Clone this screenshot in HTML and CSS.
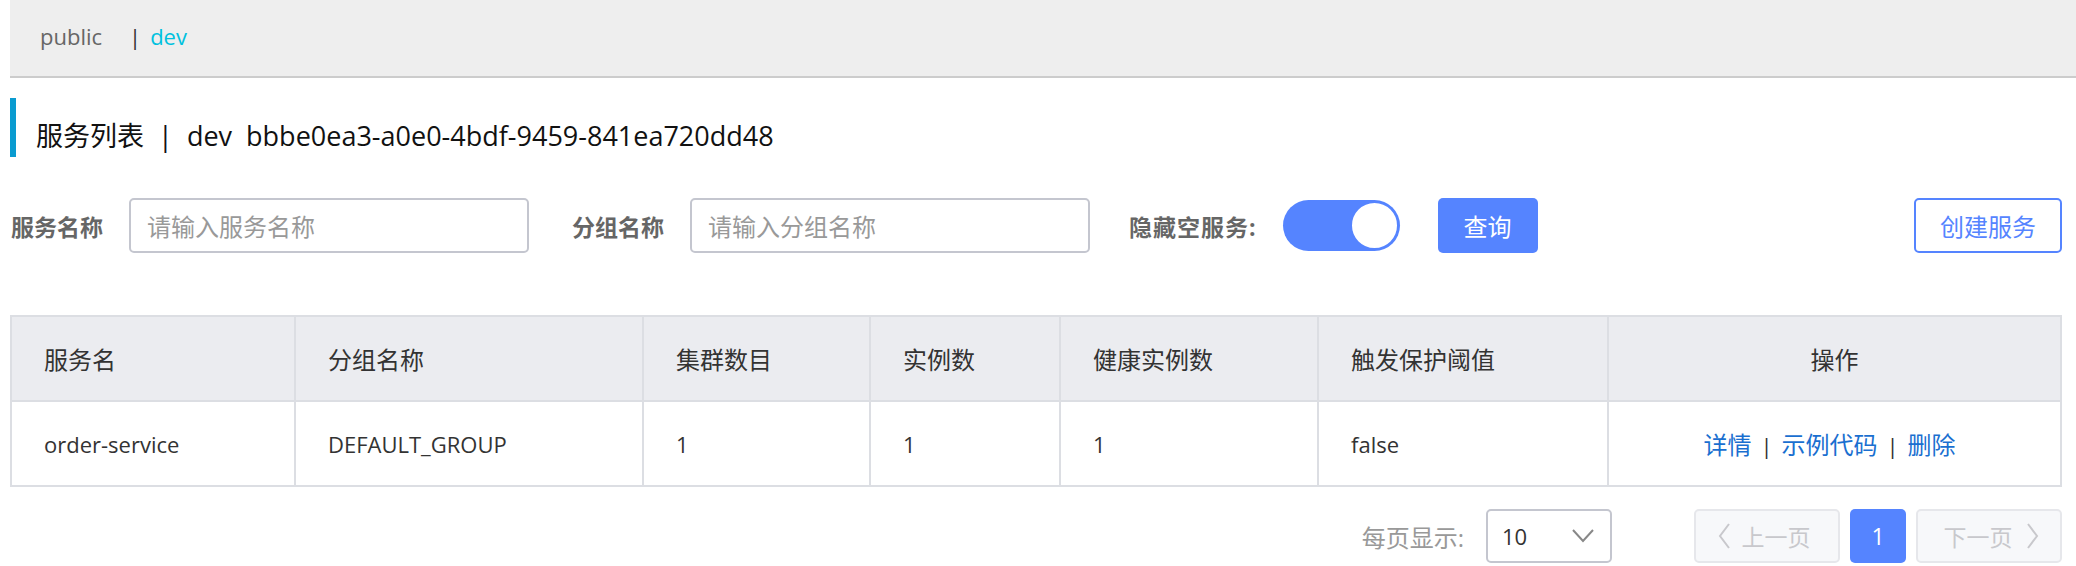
FILE: index.html
```html
<!DOCTYPE html>
<html lang="zh-CN">
<head>
<meta charset="utf-8">
<title>服务列表</title>
<link rel="stylesheet" href="styles.css">
</head>
<body>
<div class="ns-bar">
  <span class="ns-item">public</span>
  <span class="ns-sep">|</span>
  <span class="ns-item ns-active">dev</span>
</div>
<div class="page">
  <h1 class="page-title">服务列表&nbsp;&nbsp;|&nbsp;&nbsp;dev&nbsp;&nbsp;bbbe0ea3-a0e0-4bdf-9459-841ea720dd48</h1>

  <div class="filters">
    <label class="f-label">服务名称</label>
    <div class="input"><span class="placeholder">请输入服务名称</span></div>
    <label class="f-label f-gap">分组名称</label>
    <div class="input"><span class="placeholder">请输入分组名称</span></div>
    <label class="f-label f-gap f-last">隐藏空服务:</label>
    <div class="switch"><span class="knob"></span></div>
    <button class="btn btn-primary">查询</button>
    <button class="btn btn-outline">创建服务</button>
  </div>

  <table class="grid">
    <colgroup>
      <col style="width:284px"><col style="width:348px"><col style="width:227px"><col style="width:190px"><col style="width:258px"><col style="width:290px"><col>
    </colgroup>
    <thead>
      <tr>
        <th>服务名</th><th>分组名称</th><th>集群数目</th><th>实例数</th><th>健康实例数</th><th>触发保护阈值</th><th class="center">操作</th>
      </tr>
    </thead>
    <tbody>
      <tr>
        <td>order-service</td><td>DEFAULT_GROUP</td><td>1</td><td>1</td><td>1</td><td>false</td>
        <td class="center ops"><a class="link">详情</a><span class="bar">|</span><a class="link">示例代码</a><span class="bar">|</span><a class="link">删除</a></td>
      </tr>
    </tbody>
  </table>

  <div class="pager">
    <span class="pg-label">每页显示:</span>
    <div class="pg-select"><span>10</span>
      <svg class="chev" width="22" height="14" viewBox="0 0 22 14"><path d="M1 1 L11 12 L21 1" fill="none" stroke="#888" stroke-width="2"/></svg>
    </div>
    <div class="pg-btns">
      <button class="pg-btn pg-disabled pg-prev"><svg width="12" height="26" viewBox="0 0 12 26"><path d="M11 1 L2 13 L11 25" fill="none" stroke="#c8c8cc" stroke-width="2"/></svg>上一页</button>
      <button class="pg-btn pg-current">1</button>
      <button class="pg-btn pg-disabled pg-next">下一页<svg width="12" height="26" viewBox="0 0 12 26"><path d="M1 1 L10 13 L1 25" fill="none" stroke="#c8c8cc" stroke-width="2"/></svg></button>
    </div>
  </div>
</div>
</body>
</html>
```

FILE: styles.css
```css
* { box-sizing: border-box; }
html, body { margin: 0; padding: 0; background: #fff; }
body {
  font-family: "Open Sans", "Noto Sans CJK SC", sans-serif;
  color: #333;
}
.ns-bar {
  margin-left: 10px;
  height: 78px;
  background: #eeeeee;
  border-bottom: 2px solid #cccccc;
  display: flex;
  align-items: center;
  padding-left: 30px;
  padding-bottom: 4px;
  font-size: 22px;
}
.ns-item { color: #666; }
.ns-sep { color: #333; margin-left: 27px; margin-right: 9px; }
.ns-active { color: #00c1de; }

.page { padding: 0 14px 0 10px; }

.page-title {
  margin: 20px 0 0 0;
  height: 59px;
  border-left: 6px solid #0a9bd0;
  padding-left: 20px;
  display: flex;
  align-items: center;
  font-size: 27px;
  font-weight: normal;
  color: #111;
  padding-top: 14px;
}

.filters {
  margin-top: 41px;
  height: 55px;
  display: flex;
  align-items: center;
}
.f-label {
  font-size: 23px;
  font-weight: bold;
  color: #666;
  margin-left: 1px;
  margin-right: 26px;
}
.f-gap { margin-left: 43px; }
.f-last { margin-left: 39px; margin-right: 26px; letter-spacing: 1px; }
.input {
  width: 400px;
  height: 55px;
  border: 2px solid #c4c6cf;
  border-radius: 5px;
  display: flex;
  align-items: center;
  padding-left: 16px;
  font-size: 24px;
}
.placeholder { color: #999; }
.switch {
  width: 117px;
  height: 51px;
  border-radius: 26px;
  background: #5584ff;
  position: relative;
}
.knob {
  position: absolute;
  right: 1px;
  top: 1px;
  width: 49px;
  height: 49px;
  border-radius: 50%;
  background: #fff;
  border: 2px solid #5584ff;
}
.btn {
  height: 55px;
  border-radius: 5px;
  font-family: inherit;
  font-size: 24px;
  padding: 0;
  cursor: pointer;
}
.btn-primary {
  margin-left: 38px;
  width: 100px;
  background: #5584ff;
  border: none;
  color: #fff;
}
.btn-outline {
  margin-left: auto;
  width: 148px;
  background: #fff;
  border: 2px solid #5584ff;
  color: #5584ff;
}

.grid {
  margin-top: 62px;
  width: 2052px;
  border-collapse: collapse;
  table-layout: fixed;
  font-size: 22px;
}
.grid th, .grid td {
  border: 2px solid #dcdee3;
  height: 85px;
  padding: 0 0 0 32px;
  text-align: left;
  vertical-align: middle;
}
.grid th {
  background: #ebecf0;
  font-weight: normal;
  color: #333;
  font-size: 24px;
}
.grid td { color: #333; }
.grid .center { text-align: center; padding-left: 0; }
.grid .ops { font-size: 24px; padding-right: 10px; }
.link { color: #1a6fd0; cursor: pointer; }
.bar { color: #333; margin: 0 9px; font-size: 22px; }

.pager {
  margin-top: 22px;
  display: flex;
  align-items: center;
  justify-content: flex-end;
  height: 54px;
}
.pg-label { font-size: 24px; color: #999; margin-right: 22px; }
.pg-select {
  width: 126px;
  height: 54px;
  border: 2px solid #c4c6cf;
  border-radius: 5px;
  display: flex;
  align-items: center;
  justify-content: space-between;
  padding: 0 16px 0 14px;
  font-size: 22px;
  color: #333;
}
.pg-btns { display: flex; gap: 10px; margin-left: 82px; }
.pg-btn {
  height: 54px;
  border-radius: 5px;
  font-family: inherit;
  font-size: 23px;
  display: flex;
  align-items: center;
  justify-content: center;
  gap: 12px;
  padding: 0;
}
.pg-disabled {
  width: 146px;
  background: #f7f8fa;
  border: 2px solid #e6e7eb;
  color: #c8c8cc;
}
.pg-prev { padding-right: 6px; }
.pg-next { padding-left: 4px; gap: 14px; }
.pg-current {
  width: 56px;
  background: #5584ff;
  border: none;
  color: #fff;
}
```
